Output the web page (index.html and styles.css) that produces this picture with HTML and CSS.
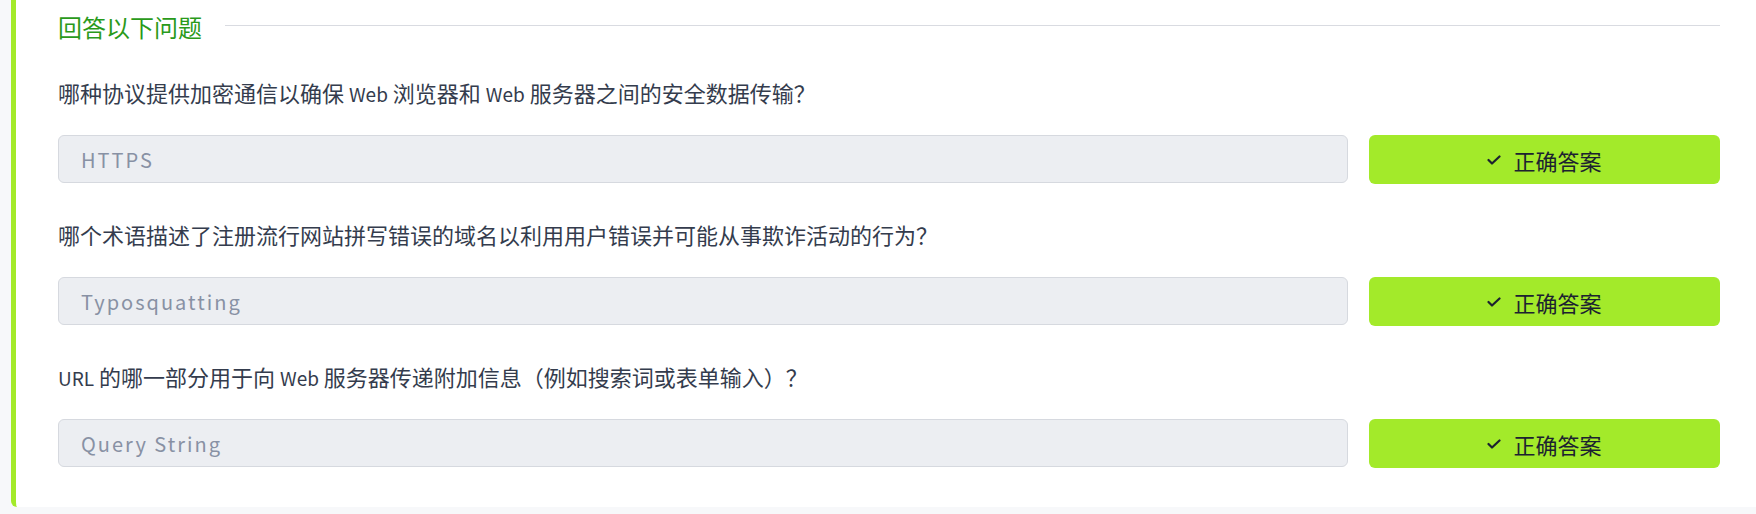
FILE: index.html
```html
<!DOCTYPE html>
<html lang="zh-CN">
<head>
<meta charset="utf-8">
<title>回答以下问题</title>
<link rel="stylesheet" href="styles.css">
</head>
<body>
<section class="card">
  <div class="heading">
    <h2 class="heading-title">回答以下问题</h2>
    <div class="heading-rule"></div>
  </div>

  <div class="question">
    <p class="question-text">哪种协议提供加密通信以确保 <span class="en">Web</span> 浏览器和 <span class="en">Web</span> 服务器之间的安全数据传输？</p>
    <div class="answer-row">
      <div class="answer-input">HTTPS</div>
      <button class="answer-btn"><svg class="check" width="14" height="10" viewBox="0 0 14 10"><polyline points="1.5,5 5,8.5 12.5,1.5" fill="none" stroke="#1c2230" stroke-width="2.2" stroke-linecap="round" stroke-linejoin="round"/></svg><span>正确答案</span></button>
    </div>
  </div>

  <div class="question">
    <p class="question-text">哪个术语描述了注册流行网站拼写错误的域名以利用用户错误并可能从事欺诈活动的行为？</p>
    <div class="answer-row">
      <div class="answer-input">Typosquatting</div>
      <button class="answer-btn"><svg class="check" width="14" height="10" viewBox="0 0 14 10"><polyline points="1.5,5 5,8.5 12.5,1.5" fill="none" stroke="#1c2230" stroke-width="2.2" stroke-linecap="round" stroke-linejoin="round"/></svg><span>正确答案</span></button>
    </div>
  </div>

  <div class="question">
    <p class="question-text"><span class="en">URL</span> 的哪一部分用于向 <span class="en">Web</span> 服务器传递附加信息（例如搜索词或表单输入）？</p>
    <div class="answer-row">
      <div class="answer-input">Query String</div>
      <button class="answer-btn"><svg class="check" width="14" height="10" viewBox="0 0 14 10"><polyline points="1.5,5 5,8.5 12.5,1.5" fill="none" stroke="#1c2230" stroke-width="2.2" stroke-linecap="round" stroke-linejoin="round"/></svg><span>正确答案</span></button>
    </div>
  </div>
</section>
</body>
</html>
```
FILE: styles.css
```css
html, body {
  margin: 0;
  padding: 0;
}
body {
  background: #f7f8fa;
  font-family: "Noto Sans CJK SC", "Noto Sans", sans-serif;
  color: #343c4d;
  width: 1756px;
  height: 514px;
  overflow: hidden;
}
.card {
  margin-left: 11px;
  background: #ffffff;
  border-left: 5px solid #a3ea2a;
  border-radius: 0 0 0 6px;
  padding: 11px 36px 40px 42px;
}
.heading {
  display: flex;
  align-items: center;
  gap: 23px;
  height: 32px;
}
.heading-title {
  margin: 0;
  font-size: 24px;
  font-weight: 400;
  line-height: 32px;
  color: #2a9a1a;
  white-space: nowrap;
}
.heading-rule {
  flex: 1;
  height: 1px;
  background: #d9dbe1;
  margin-top: -4px;
}
.question {
  margin-top: 34px;
}
.question + .question {
  margin-top: 36px;
}
.question-text {
  margin: 0 0 28px 0;
  height: 30px;
  font-size: 22px;
  line-height: 30px;
  color: #343c4d;
  white-space: nowrap;
}
.en {
  font-size: 19px;
  line-height: 1;
}
.answer-row {
  display: flex;
  align-items: flex-start;
  gap: 21px;
  height: 48px;
}
.answer-input {
  flex: 1;
  box-sizing: border-box;
  height: 48px;
  background: #eceef2;
  border: 1px solid #d6d9df;
  border-radius: 6px;
  padding-left: 22px;
  display: flex;
  align-items: center;
  font-size: 20px;
  letter-spacing: 2px;
  color: #8891a4;
}
.answer-btn {
  width: 351px;
  height: 49px;
  border: none;
  border-radius: 6px;
  background: #a3ea2a;
  display: flex;
  align-items: center;
  justify-content: center;
  gap: 12px;
  font-family: "Noto Sans CJK SC", "Noto Sans", sans-serif;
  font-size: 22px;
  color: #1c2230;
  padding: 0;
  cursor: pointer;
}
.check {
  display: block;
}
```
